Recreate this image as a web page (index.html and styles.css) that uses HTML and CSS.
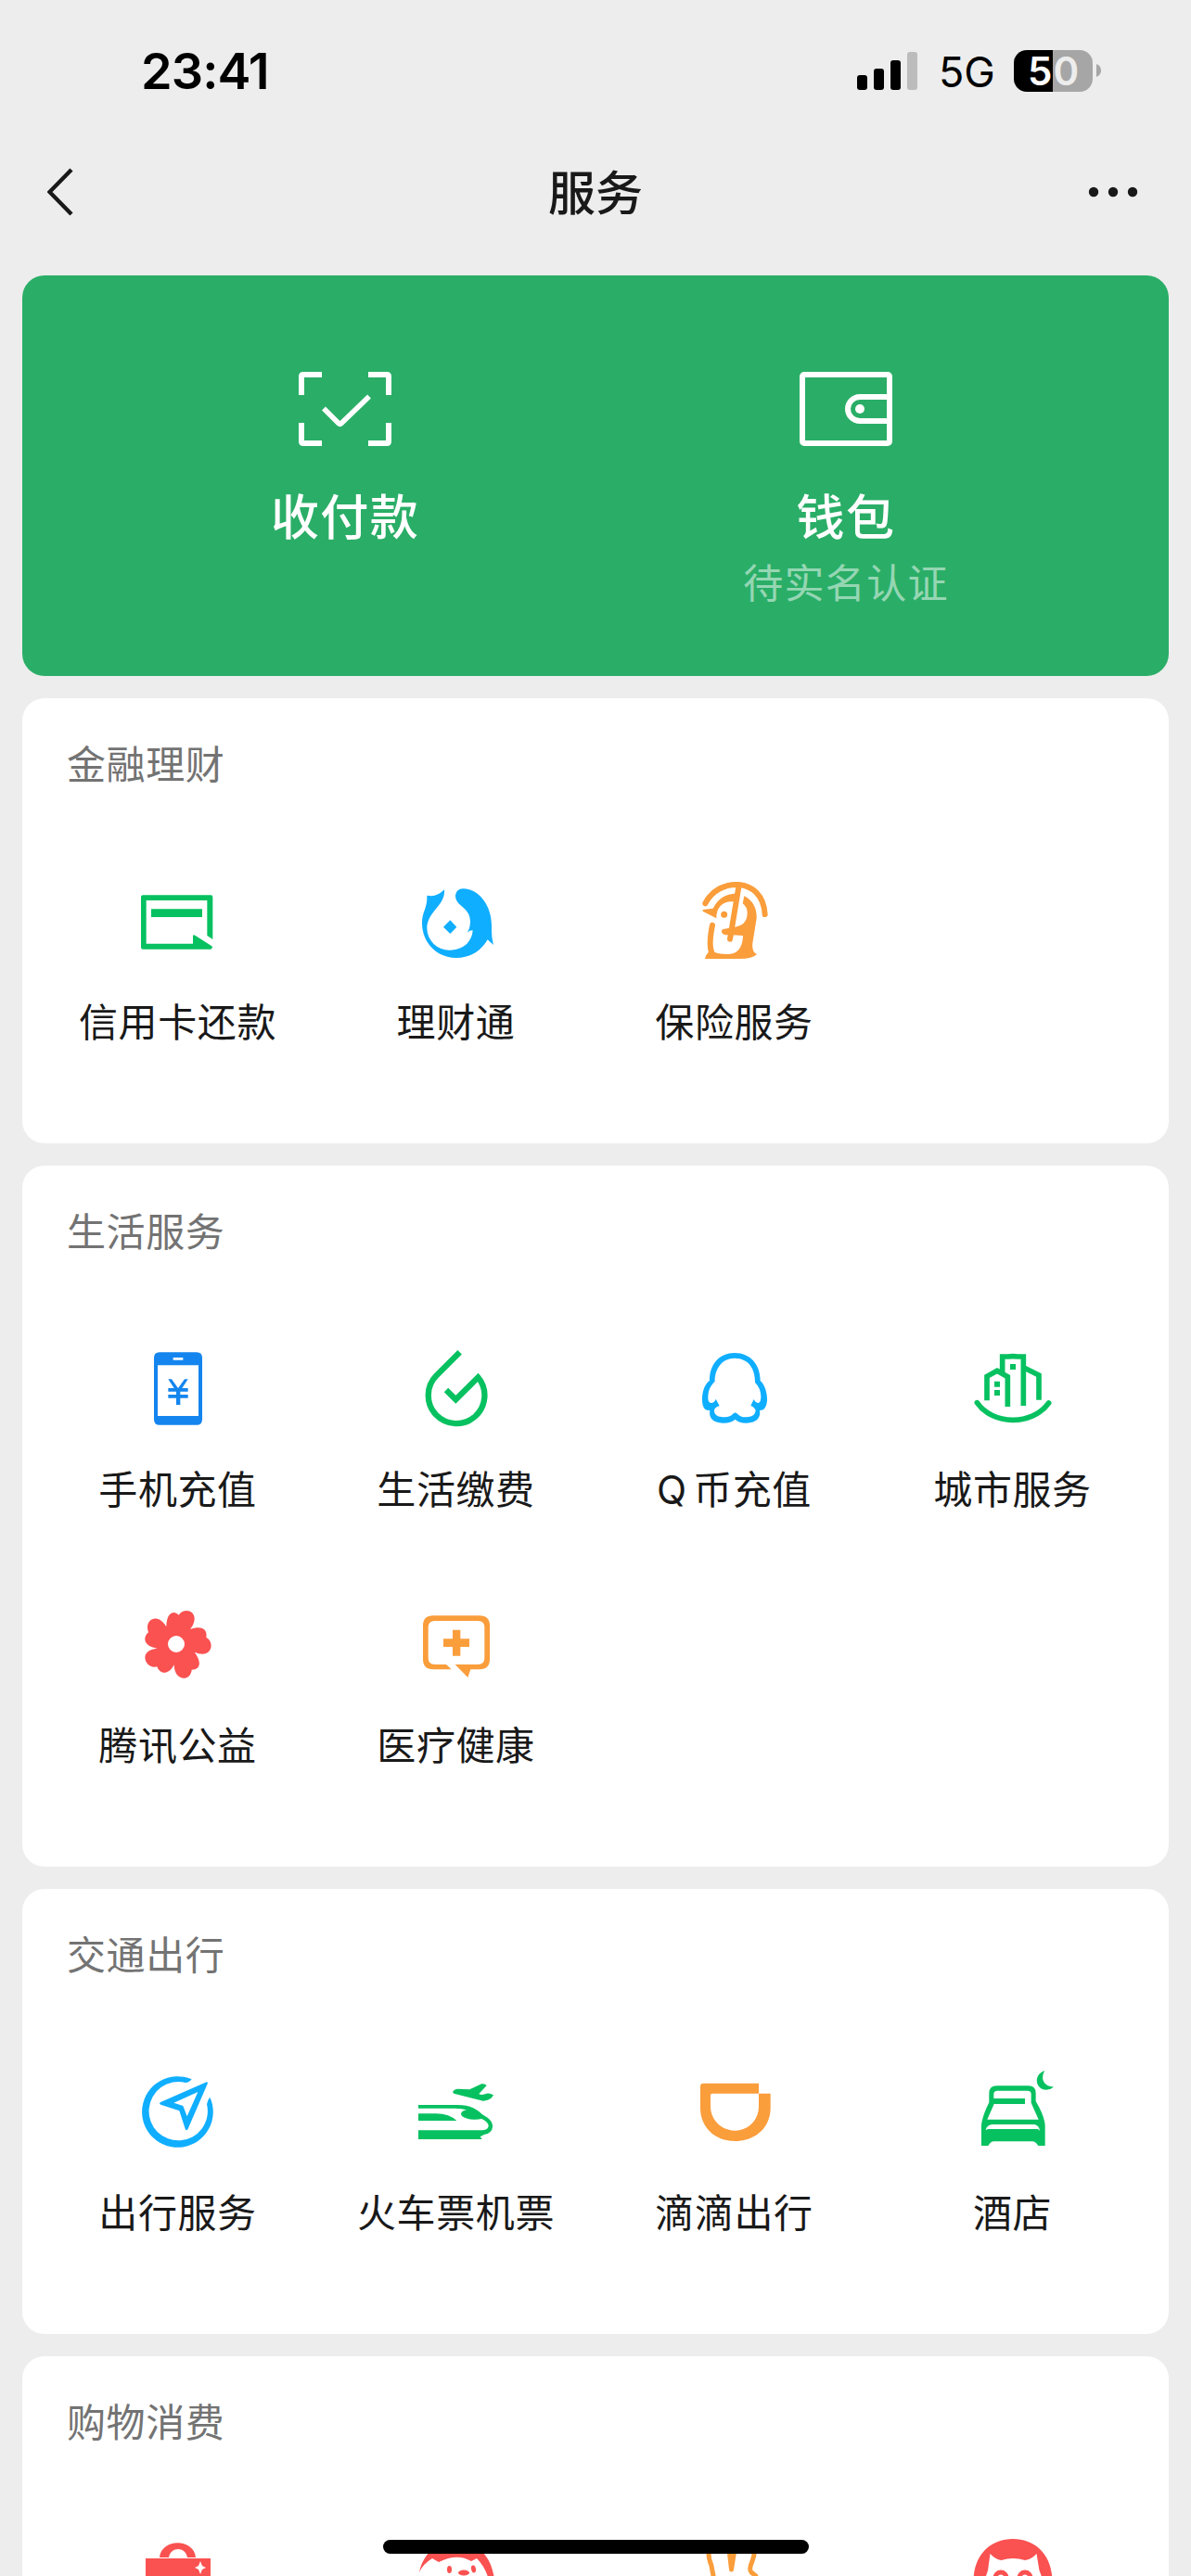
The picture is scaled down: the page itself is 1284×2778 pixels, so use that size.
FILE: index.html
```html
<!DOCTYPE html>
<html lang="zh-CN">
<head>
    <meta charset="UTF-8">
    <meta name="viewport" content="width=device-width, initial-scale=1.0">
    <title>服务</title>
    <link rel="stylesheet" href="styles.css">
</head>
<body>

    <div class="status-bar">
        <span class="time">23:41</span>
        <div class="status-icons">
            <svg class="signal" width="66" height="42" viewBox="0 0 66 42">
                <rect x="0" y="26" width="11" height="16" rx="3"/>
                <rect x="18" y="19" width="11" height="23" rx="3"/>
                <rect x="36" y="10" width="11" height="32" rx="3"/>
                <rect x="54" y="1" width="11" height="41" rx="3" fill="#bcbcbc"/>
            </svg>
            <span class="network">5G</span>
            <div class="battery"><span class="five">5</span><span class="zero">0</span></div>
            <svg class="battery-tip" width="5" height="14" viewBox="0 0 5 14"><path d="M0 0Q5 2 5 7T0 14Z" fill="#a6a6a6"/></svg>
        </div>
    </div>

    <header class="navbar">
        <svg class="back" width="30" height="52" viewBox="0 0 30 52"><path d="M26 2L2.500 26L26 50" fill="none" stroke="#191919" stroke-width="4.400"/></svg>
        <h1>服务</h1>
        <svg class="more" width="54" height="12" viewBox="0 0 54 12" fill="#191919">
            <circle cx="6" cy="6" r="5.2"/>
            <circle cx="27" cy="6" r="5.2"/>
            <circle cx="48" cy="6" r="5.2"/>
        </svg>
    </header>

    <main>
        <section class="pay-card">
            <div class="pay-item">
                <svg width="100" height="80" viewBox="0 0 100 80" fill="none" stroke="#fff" stroke-width="6">
                    <path d="M25 3H5Q3 3 3 5V25M75 3H95Q97 3 97 5V25M3 55V75Q3 77 5 77H25M97 55V75Q97 77 95 77H75"/>
                    <path d="M27 39.500L43 55.500Q44.500 57 46 55.500L76 26.500" stroke-width="5.500"/>
                </svg>
                <span class="pay-name">收付款</span>
            </div>
            <div class="pay-item">
                <svg width="100" height="80" viewBox="0 0 100 80" fill="none" stroke="#fff" stroke-width="6">
                    <rect x="3" y="3" width="94" height="74" rx="2"/>
                    <path d="M97 27H65a13 13 0 0 0 0 26H97"/>
                    <circle cx="65" cy="40" r="5" fill="#fff" stroke="none"/>
                </svg>
                <span class="pay-name">钱包</span>
                <span class="pay-note">待实名认证</span>
            </div>
        </section>

        <section class="card">
            <h2>金融理财</h2>
            <div class="grid">
                <div class="item">
                    <svg class="icon green" viewBox="51 57 270 270">
                        <path fill-rule="evenodd" d="M72 106H292Q298 106 298 112V249L280 237V123H83V263H234V238Q235 232 241 236L295 271Q300 276 292 281H72Q66 281 66 275V112Q66 106 72 106Z"/>
                        <path d="M99 151H264V177H99Z"/>
                    </svg>
                    <span>信用卡还款</span>
                </div>
                <div class="item">
                    <svg class="icon blue" viewBox="81 57 270 270">
                        <path d="M121 107Q153 114 177 88C182 140 121 158 121 214A72 71 0 0 0 194 284C239 284 267 256 269 220Q258 220 251 227Q260 215 261 192C261 142 212 144 213 106Q216 86 238 85C287 85 330 138 330 204V222Q330 245 336 267L317 250Q282 309 216 309C153 309 105 260 105 196C105 158 123 150 121 107Z"/>
                        <path d="M196 187L217 209L196 231L174 209Z"/>
                    </svg>
                    <span>理财通</span>
                </div>
                <div class="item">
                    <svg class="icon orange" viewBox="981 57 270 270">
                        <path d="M1021 133C1060 49 1207 43 1214 168M1129 80L1101 248" fill="none" stroke="#fa9d3b" stroke-width="18" stroke-linecap="round"/>
                        <path d="M1044 203Q1031 269 1042 292" fill="none" stroke="#fa9d3b" stroke-width="18" stroke-linecap="round"/>
                        <path d="M1013 153L1046 149Q1070 101 1121 101L1117 128C1080 122 1056 146 1057 181L1013 158Z"/>
                        <circle cx="1082" cy="169" r="10.500"/>
                        <path d="M1147 109Q1188 130 1187 181L1174 262Q1171 290 1188 297Q1175 312 1130 312H1020Q1024 293 1039 286Q1057 297 1093 297Q1141 297 1143 237L1110 235H1087Q1073 231 1074 222Q1075 214 1085 215L1109 210Q1158 207 1157 162Q1157 145 1142 133Z"/>
                    </svg>
                    <span>保险服务</span>
                </div>
            </div>
        </section>

        <section class="card">
            <h2>生活服务</h2>
            <div class="grid">
                <div class="item">
                    <svg class="icon phone" viewBox="51 69 270 270">
                        <path fill-rule="evenodd" d="M126 85H246Q264 85 264 103V302Q264 320 246 320H126Q108 320 108 302V103Q108 85 126 85ZM120 127V291H252V127ZM170 102V110H202V102Z"/>
                        <path d="M154 172H165L186 201L207 172H218L199 201H218V212H193V222H218V233H193V255H180V233H154V222H180V212H154V201H173Z"/>
                    </svg>
                    <span>手机充值</span>
                </div>
                <div class="item">
                    <svg class="icon" viewBox="951 69 270 270">
                        <path d="M1097 85L1022 160A91 91 0 1 0 1156 166L1084 238L1053 207" fill="none" stroke="#07c160" stroke-width="19"/>
                    </svg>
                    <span>生活缴费</span>
                </div>
                <div class="item">
                    <svg class="icon blue" viewBox="141 69 270 270">
                        <path fill-rule="evenodd" d="M276 87C326 87 359 124 359 177C374 190 382 218 381 243Q378 273 357 273C362 304 337 314 313 314Q290 314 278 302Q264 314 240 314C213 314 191 303 196 273C177 274 171 260 171 237C171 211 180 188 195 176C195 123 227 87 276 87ZM276 104C235 104 212 138 212 179C194 197 190 213 190 233Q190 249 202 249Q211 247 215 236L227 258Q210 263 210 274C210 290 226 295 243 295Q263 295 272 283Q278 278 285 284Q295 295 311 295Q342 295 344 273Q340 262 328 258L338 237Q343 249 354 249Q362 243 361 228Q360 200 342 183C343 143 324 104 276 104Z"/>
                    </svg>
                    <span class="q-coin">Q 币充值</span>
                </div>
                <div class="item">
                    <svg class="icon" viewBox="1041 69 270 270" fill="none" stroke="#07c160" stroke-width="17">
                        <path d="M1060 248C1110 321 1238 324 1292 249" stroke-linecap="round"/>
                        <path d="M1092 241V163L1125 145L1159 164V261M1142 153V99H1160Q1176 97 1192 99H1210V258M1212 135L1260 159V239"/>
                        <path d="M1167 132H1185M1116 188H1134M1116 216H1134" stroke-width="18"/>
                    </svg>
                    <span>城市服务</span>
                </div>
                <div class="item">
                    <svg class="icon red" viewBox="171 57 270 270">
                        <path fill-rule="evenodd" d="M268 133C268 91 290 77 308 95C326 70 360 81 359 108Q358 125 345 141C378 128 402 138 397 167C422 180 417 221 385 221Q372 221 359 215C382 245 380 271 350 272C347 310 294 311 293 256C276 291 246 287 238 262C208 269 190 236 204 218Q215 205 239 203C201 199 187 172 210 151C195 112 238 84 268 133ZM300 162A27 27 0 1 0 300 216A27 27 0 1 0 300 162Z"/>
                    </svg>
                    <span>腾讯公益</span>
                </div>
                <div class="item">
                    <svg class="icon orange" viewBox="1071 57 270 270">
                        <path d="M1131 97H1281Q1314 97 1314 130V238Q1314 271 1281 271H1252L1243 297L1202 255H1276Q1297 255 1297 234V135Q1297 114 1276 114H1136Q1115 114 1115 135V234Q1115 255 1136 255H1173L1190 271H1131Q1098 271 1098 238V130Q1098 97 1131 97Z"/>
                        <path d="M1194 143H1219V172H1248V198H1219V227H1194V198H1164V172H1194Z"/>
                    </svg>
                    <span>医疗健康</span>
                </div>
            </div>
        </section>

        <section class="card">
            <h2>交通出行</h2>
            <div class="grid">
                <div class="item">
                    <svg class="icon blue" viewBox="141 69 270 270">
                        <path d="M320 97A115 115 0 1 0 379 155Q371 164 369 178A95 95 0 1 1 300 108Q312 108 320 97Z"/>
                        <path fill-rule="evenodd" d="M368 106Q373 105 371 112L308 257Q303 267 299 257L280 199L220 179Q212 174 221 170ZM340 138L262 173L292 183L305 217Z"/>
                    </svg>
                    <span>出行服务</span>
                </div>
                <div class="item">
                    <svg class="icon green" viewBox="1041 69 270 270">
                        <path d="M1164 139Q1168 128 1181 128L1219 130L1257 112Q1269 110 1274 117L1249 144Q1255 150 1269 145Q1280 139 1296 148Q1288 166 1263 167L1168 143Z"/>
                        <path d="M1053 180H1180C1217 180 1238 190 1259 210C1280 222 1294 233 1293 251Q1291 272 1266 276L1253 283L1259 291H1053V262H1261Q1280 261 1280 247Q1278 234 1258 225C1222 232 1191 220 1191 209Q1191 200 1209 196Q1194 191 1171 191H1053Z"/>
                        <path d="M1053 208H1110Q1154 209 1177 231H1053Z"/>
                    </svg>
                    <span>火车票机票</span>
                </div>
                <div class="item">
                    <svg class="icon orange" viewBox="141 69 270 270">
                        <path fill-rule="evenodd" d="M175 110H354V143H392V190C392 252 344 297 278 297S165 252 165 190V120Q165 110 175 110ZM203 143Q198 143 198 148V185C198 228 233 263 277 263S354 228 354 185V143Z"/>
                    </svg>
                    <span>滴滴出行</span>
                </div>
                <div class="item">
                    <svg class="icon green" viewBox="1041 69 270 270">
                        <path d="M1279 69C1240 82 1249 131 1284 131Q1300 131 1307 121C1278 121 1263 96 1279 69Z"/>
                        <path fill-rule="evenodd" d="M1124 118H1226Q1250 118 1250 142V168Q1277 213 1280 245V312H1258Q1250 298 1238 298H1114Q1104 298 1096 312H1074V245Q1077 216 1099 172V142Q1099 118 1124 118ZM1126 134Q1114 134 1114 145V159H1215V177H1115L1093 227H1259L1235 173V145Q1235 134 1223 134ZM1108 243Q1091 245 1088 262L1095 258H1257L1263 263Q1260 245 1245 243Z"/>
                    </svg>
                    <span>酒店</span>
                </div>
            </div>
        </section>

        <section class="card card-last">
            <h2>购物消费</h2>
            <div class="grid">
                <div class="item">
                    <svg class="icon red" viewBox="0 0 90 90">
                        <path d="M25 21C27 0 62 0 64 21H55C53 9 37 9 35 21Z"/>
                        <path fill-rule="evenodd" d="M10 22H80V90H10ZM69 25L67 30L63 32L67 34L69 39L71 34L75 32L71 30Z"/>
                    </svg>
                </div>
                <div class="item">
                    <svg class="icon red" viewBox="0 0 90 90">
                        <path d="M5 37C15 -10 80 -10 86 45H80Q76 31 67 22L61 25Q46 16 26 26L19 22Q9 28 5 37Z"/>
                        <ellipse cx="37.500" cy="34" rx="2.500" ry="4"/>
                        <ellipse cx="63.500" cy="33.500" rx="2.500" ry="4" transform="rotate(-12 63.500 33.500)"/>
                        <ellipse cx="53" cy="37.500" rx="6" ry="3"/>
                    </svg>
                </div>
                <div class="item">
                    <svg class="icon" viewBox="0 0 90 90" fill="none" stroke="#fa9d3b" stroke-width="5" stroke-linejoin="round">
                        <path d="M17 12Q16 20 20 30L23 46M39 12L41.500 34L45 12M66 12Q67 18 64 25Q60 34 63 37L69 42"/>
                    </svg>
                </div>
                <div class="item">
                    <svg class="icon red" viewBox="0 0 90 90">
                        <path d="M2.500 47C2.500 18 21 1 45 1S87.500 18 87.500 47H78L73.500 35L70.500 17Q65 23 58 24Q45 20 32.500 24Q26 23 20.500 17L18 35L14 47Z"/>
                        <circle cx="32" cy="43" r="6" fill="none" stroke="#fa5151" stroke-width="5"/>
                        <circle cx="58" cy="43" r="6" fill="none" stroke="#fa5151" stroke-width="5"/>
                    </svg>
                </div>
            </div>
        </section>
    </main>

    <div class="home-indicator"></div>

</body>
</html>
```
FILE: styles.css
```css
* {
    margin: 0;
    padding: 0;
    box-sizing: border-box;
}

body {
    position: relative;
    width: 1284px;
    height: 2778px;
    overflow: hidden;
    background-color: #ededed;
    color: #191919;
    font-family: Inter, 'Noto Sans CJK SC', sans-serif;
}

.status-bar {
    display: flex;
    justify-content: space-between;
    height: 152px;
    padding: 0 97px 0 152px;
    align-items: center;
    color: #000;
}

.time {
    padding-top: 2px;
    font-size: 54px;
    font-weight: 600;
    line-height: 60px;
    letter-spacing: -0.9px;
}

.status-icons {
    display: flex;
    align-items: center;
}

.signal {
    margin-right: 22px;
}

.network {
    width: 61px;
    margin-right: 20px;
    padding-top: 4px;
    font-size: 45px;
    line-height: 50px;
    white-space: nowrap;
}

.battery {
    display: flex;
    width: 85px;
    height: 45px;
    border-radius: 14px;
    background: linear-gradient(to right, #000 50%, #a6a6a6 50%);
    font-size: 42px;
    font-weight: 600;
    line-height: 46px;
}

.battery span {
    width: 50%;
}

.battery .five {
    padding-right: 1px;
    color: #fff;
    text-align: right;
}

.battery .zero {
    color: #ededed;
}

.battery-tip {
    margin-left: 4px;
}

.navbar {
    display: grid;
    grid-template-columns: 1fr auto 1fr;
    align-items: center;
    height: 145px;
    padding: 0 57px 35px 51px;
}

.navbar h1 {
    padding: 3px 0 0 6px;
    font-size: 51px;
    font-weight: 500;
    line-height: 60px;
}

.more {
    justify-self: end;
}

main {
    display: flex;
    flex-direction: column;
    gap: 24px;
    height: 2481px;
    padding: 0 24px;
    overflow: hidden;
}

.pay-card {
    display: flex;
    flex-shrink: 0;
    justify-content: center;
    height: 432px;
    padding-top: 104px;
    border-radius: 24px;
    background-color: #2aae67;
    color: #fff;
}

.pay-item {
    display: flex;
    flex-direction: column;
    align-items: center;
    width: 540px;
}

.pay-name {
    margin-top: 44px;
    font-size: 52px;
    font-weight: 500;
    line-height: 68px;
    letter-spacing: 1.4px;
}

.pay-note {
    margin-top: 6px;
    font-size: 43px;
    line-height: 60px;
    letter-spacing: 1.3px;
    opacity: 0.5;
}

.card {
    flex-shrink: 0;
    padding: 0 18px 60px;
    border-radius: 24px;
    background-color: #fff;
}

.card h2 {
    padding: 42px 30px 0;
    color: #737373;
    font-size: 42px;
    font-weight: 400;
    line-height: 60px;
    letter-spacing: 0.6px;
}

.grid {
    display: grid;
    grid-template-columns: repeat(4, 300px);
    padding-top: 42px;
}

.item {
    display: flex;
    flex-direction: column;
    align-items: center;
    height: 276px;
    padding-top: 52px;
    font-size: 42px;
    line-height: 60px;
    letter-spacing: 0.6px;
    white-space: nowrap;
}

.item span {
    padding-right: 1px;
}

.item .q-coin {
    word-spacing: -6px;
}

/* runs on under the bottom of the screen */
.card-last {
    flex: 1;
    min-height: 0;
    padding-bottom: 0;
    border-radius: 24px 24px 0 0;
    overflow: hidden;
}

.icon {
    width: 90px;
    height: 90px;
    margin-bottom: 34px;
    overflow: visible;
}

.green {
    fill: #07c160;
}

.blue {
    fill: #10aeff;
}

.phone {
    fill: #1485ee;
}

.orange {
    fill: #fa9d3b;
}

.red {
    fill: #fa5151;
}

.home-indicator {
    position: absolute;
    left: 413px;
    top: 2739px;
    width: 459px;
    height: 15px;
    border-radius: 8px;
    background-color: #000;
}
```
